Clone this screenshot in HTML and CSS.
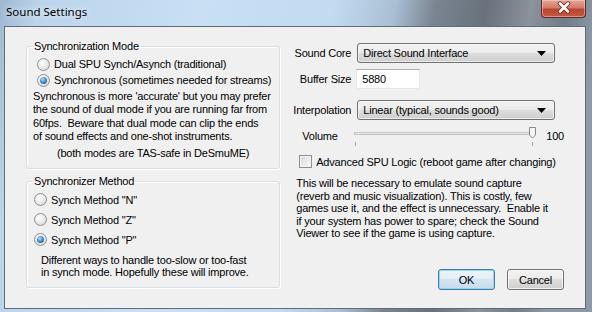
FILE: index.html
```html
<!DOCTYPE html>
<html>
 <head>
  <meta charset="utf-8">
  <title>Sound Settings</title>
  <link rel="stylesheet" href="styles.css">
 </head>
<body>

<div class="window">

  <div class="titlebar">
    <span class="title">Sound Settings</span>
    <span class="close">
      <svg width="45" height="18" viewBox="0 0 45 18">
        <path d="M19 4.5 L27 12.5 M27 4.5 L19 12.5" stroke="#6b2a20" stroke-width="4.4" stroke-linecap="round"/>
        <path d="M19 4.5 L27 12.5 M27 4.5 L19 12.5" stroke="#ffffff" stroke-width="2.6" stroke-linecap="round"/>
      </svg>
    </span>
  </div>

  <div class="client">

    <div class="left-col">

      <fieldset class="group sync-mode">
        <legend>Synchronization Mode</legend>
        <div class="options">
          <label class="radio"><span class="dot"></span>Dual SPU Synch/Asynch (traditional)</label>
          <label class="radio checked"><span class="dot"></span>Synchronous (sometimes needed for streams)</label>
        </div>
        <p class="note">Synchronous is more 'accurate' but you may prefer<br>the sound of dual mode if you are running far from<br>60fps.&nbsp; Beware that dual mode can clip the ends<br>of sound effects and one-shot instruments.</p>
        <p class="note-center">(both modes are TAS-safe in DeSmuME)</p>
      </fieldset>

      <fieldset class="group sync-method">
        <legend>Synchronizer Method</legend>
        <div class="options">
          <label class="radio"><span class="dot"></span>Synch Method "N"</label>
          <label class="radio"><span class="dot"></span>Synch Method "Z"</label>
          <label class="radio checked"><span class="dot"></span>Synch Method "P"</label>
        </div>
        <p class="note">Different ways to handle too-slow or too-fast<br>in synch mode. Hopefully these will improve.</p>
      </fieldset>

    </div>

    <div class="right-col">

      <div class="field core-row">
        <span class="field-label">Sound Core</span>
        <div class="combo">
          <span>Direct Sound Interface</span>
          <svg width="9" height="5" viewBox="0 0 9 5"><path d="M0 0 H9 L4.5 5 Z" fill="#000"/></svg>
        </div>
      </div>

      <div class="field buffer-row">
        <span class="field-label">Buffer Size</span>
        <div class="textbox">5880</div>
      </div>

      <div class="field interp-row">
        <span class="field-label">Interpolation</span>
        <div class="combo">
          <span>Linear (typical, sounds good)</span>
          <svg width="9" height="5" viewBox="0 0 9 5"><path d="M0 0 H9 L4.5 5 Z" fill="#000"/></svg>
        </div>
      </div>

      <div class="volume-row">
        <span class="volume-label">Volume</span>
        <svg class="slider" width="184" height="22" viewBox="0 0 184 22">
          <rect x="2.5" y="7.5" width="179" height="2" fill="#e7eaea" stroke="#c4c4c4"/>
          <path d="M3.5 17 V21 M180.5 17 V21" stroke="#a8a8a8"/>
          <path d="M177.5 2.5 H183.5 V10 L180.5 13 L177.5 10 Z" fill="#f4f4f4" stroke="#8a8a8a"/>
        </svg>
        <span class="volume-value">100</span>
      </div>

      <label class="check"><span class="box"></span>Advanced SPU Logic (reboot game after changing)</label>

      <p class="capture-note">This will be necessary to emulate sound capture<br>(reverb and music visualization). This is costly, few<br>games use it, and the effect is unnecessary.&nbsp; Enable it<br>if your system has power to spare; check the Sound<br>Viewer to see if the game is using capture.</p>

      <div class="buttons">
        <button type="button" class="btn default">OK</button>
        <button type="button" class="btn">Cancel</button>
      </div>

    </div>

  </div>

</div>

</body>
</html>
```

FILE: styles.css
```css
* {
  box-sizing: border-box;
}

body {
  margin: 0;
  font-family: "Liberation Sans", Arial, sans-serif;
  font-size: 11px;
  letter-spacing: -0.2px;
  color: #000;
}

/* Aero window frame */
.window {
  width: 592px;
  height: 312px;
  display: flex;
  flex-direction: column;
  background: linear-gradient(100deg, #9fb8cf 0px, #bcd5ec 40px, #c8dff4 200px, #c2dbf1 330px, #a9bfd3 390px, #7a8591 430px, #68717c 480px, #8a929b 525px, #737d88 560px, #8d99a6 592px);
}

.titlebar {
  height: 26px;
  display: flex;
  align-items: flex-start;
  padding-left: 6px;
}

.title {
  font-family: "Noto Sans", "Open Sans", sans-serif;
  font-size: 11.5px;
  letter-spacing: 0;
  line-height: 24px;
  color: #000;
  text-shadow: 0 0 6px rgba(255, 255, 255, 0.9);
}

.close {
  margin-left: auto;
  margin-right: 6px;
  width: 45px;
  height: 18px;
  border: 1px solid #5a2a24;
  border-top: none;
  border-radius: 0 0 4px 4px;
  background: linear-gradient(#e3a596 0%, #d27c69 45%, #bd4431 55%, #c45a42 100%);
  box-shadow: inset 0 0 0 1px rgba(255, 220, 210, 0.45);
}

.close svg {
  display: block;
  margin-top: -1px;
  margin-left: -1px;
}

/* Dialog client area */
.client {
  flex: 1;
  margin: 0 6px 3px 4px;
  border: 1px solid #5f6d7b;
  background: #f0f0f0;
  display: flex;
  padding: 0 21px 0 21px;
}

.left-col {
  width: 258px;
  margin-top: 13px;
}

.group {
  margin: 0;
  padding: 0 6px 8px;
  border: 1px solid #d5dfe5;
  border-radius: 3px;
  box-shadow: inset 1px 1px 0 #fff, 1px 1px 0 #fff;
}

.group legend {
  padding: 0 1px;
  line-height: 13px;
}

.sync-mode .options {
  padding-top: 3px;
  padding-left: 4px;
}

.sync-mode .radio {
  height: 16px;
}

.sync-mode .note {
  margin: 2px 0 0;
  line-height: 13.4px;
  white-space: nowrap;
}

.note-center {
  margin: 3px 0 0;
  line-height: 13px;
  text-align: center;
  white-space: nowrap;
}

.sync-method {
  margin-top: 6px;
}

.sync-method .options {
  padding-top: 2px;
  padding-left: 1px;
}

.sync-method .radio {
  height: 20px;
}

.sync-method .note {
  margin: 4px 0 0 8px;
  line-height: 12.5px;
  white-space: nowrap;
}

/* Radio buttons */
.radio {
  display: flex;
  align-items: center;
  gap: 4px;
  white-space: nowrap;
}

.dot {
  width: 13px;
  height: 13px;
  flex: none;
  border-radius: 50%;
  border: 1px solid #8f9091;
  background: radial-gradient(circle at 40% 35%, #ffffff 0%, #ececec 45%, #d0d0d0 100%);
  display: flex;
  align-items: center;
  justify-content: center;
}

.checked .dot::after {
  content: "";
  width: 7px;
  height: 7px;
  border-radius: 50%;
  background: radial-gradient(circle at 40% 35%, #b7e3fb 0%, #3f94d0 45%, #0f4d82 100%);
}

/* Right column controls */
.right-col {
  flex: 1;
  margin-left: 11px;
  display: flex;
  flex-direction: column;
}

.field {
  display: flex;
  align-items: center;
}

.field-label {
  width: 60px;
  margin-right: 6px;
  text-align: right;
  white-space: nowrap;
}

.core-row {
  margin-top: 16px;
}

.buffer-row {
  margin-top: 6px;
}

.interp-row {
  margin-top: 11px;
}

.combo {
  width: 198px;
  height: 20px;
  display: flex;
  align-items: center;
  justify-content: space-between;
  padding: 0 8px 0 5px;
  border: 1px solid #707070;
  border-radius: 3px;
  background: linear-gradient(#f2f2f2 0%, #ebebeb 50%, #dddddd 50%, #cfcfcf 100%);
  box-shadow: inset 0 0 0 1px rgba(255, 255, 255, 0.6);
}

.textbox {
  width: 64px;
  height: 20px;
  margin-left: -1px;
  padding: 0 5px;
  line-height: 18px;
  background: #fff;
  border: 1px solid #e3e9ef;
  border-top-color: #abadb3;
}

.volume-row {
  margin-top: 5px;
  height: 22px;
  display: flex;
  align-items: center;
}

.volume-label {
  width: 61px;
  padding-left: 11px;
}

.slider {
  display: block;
}

.volume-value {
  margin-left: 10px;
}

/* Checkbox */
.check {
  margin-top: 8px;
  margin-left: 8px;
  height: 13px;
  display: flex;
  align-items: center;
  gap: 4px;
  white-space: nowrap;
}

.box {
  width: 13px;
  height: 13px;
  flex: none;
  border: 1px solid #8f8f8f;
  background: linear-gradient(135deg, #d4d4d4 0%, #eeeeee 60%, #f8f8f8 100%);
  box-shadow: inset 0 0 0 1px #f4f4f4;
}

.capture-note {
  margin: 9px 0 0 5px;
  line-height: 12.5px;
  white-space: nowrap;
}

.buttons {
  margin-top: auto;
  margin-bottom: 18px;
  display: flex;
  justify-content: flex-end;
  gap: 12px;
}

.btn {
  width: 57px;
  height: 21px;
  padding: 0;
  font-family: inherit;
  font-size: 11px;
  letter-spacing: inherit;
  color: #000;
  border: 1px solid #707070;
  border-radius: 3px;
  background: linear-gradient(#f2f2f2 0%, #ebebeb 50%, #dddddd 50%, #cfcfcf 100%);
  box-shadow: inset 0 0 0 1px rgba(255, 255, 255, 0.7);
}

.btn.default {
  border-color: #3c7fb1;
  background: linear-gradient(#eef6fb 0%, #e2eef7 50%, #d3e5f2 50%, #c6dcec 100%);
  box-shadow: inset 0 0 0 1px #9ed0f0;
}
```
